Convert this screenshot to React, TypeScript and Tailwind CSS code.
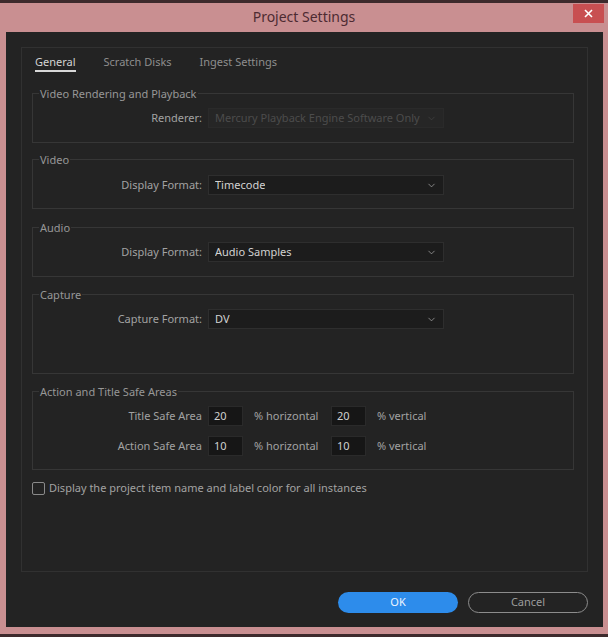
import { ChevronDown } from 'lucide-react'

const font = { fontFamily: '"Noto Sans", "Open Sans", sans-serif' }

const Select = ({ value, disabled = false }: { value: string, disabled?: boolean }) => {
    return <div className={`flex items-center justify-between w-[236px] h-[20px] pl-[6px] pr-[6px] border ${disabled ? 'bg-[#262626] border-[#2a2a2a] text-[#4c4c4c]' : 'bg-[#1c1c1c] border-[#2e2e2e] text-[#d2d2d2]'}`}>
        <span className="truncate">{value}</span>
        <ChevronDown size={11} strokeWidth={1.5} className={disabled ? 'text-[#444]' : 'text-[#b0b0b0]'} />
    </div>
}

const Row = ({ label, children }: { label: string, children: React.ReactNode }) => {
    return <div className="flex items-center h-[20px]">
        <div className="w-[175px] text-right pr-[6px] text-[#a2a2a2]">{label}</div>
        {children}
    </div>
}

const Group = ({ title, children, className = '' }: { title: string, children: React.ReactNode, className?: string }) => {
    return <fieldset className={`border border-[#363636] ml-[10px] mr-[13px] pl-0 ${className}`}>
        <legend className="ml-[6px] px-[1px] text-[#979797] leading-[15px]">{title}</legend>
        {children}
    </fieldset>
}

const NumBox = ({ value }: { value: string }) => {
    return <div className="w-[35px] h-[20px] bg-[#161616] border border-[#2a2a2a] pl-[5px] text-[#d0d0d0] leading-[18px]">{value}</div>
}

export default function App() {
    return <div className="w-[608px] h-[637px] bg-[#c98f91] flex flex-col text-[11px]" style={font}>
        <div className="h-[3px] bg-[#3d2a2c]" />
        <div className="h-[29px] flex items-center justify-center relative">
            <span className="text-[14px] text-[#4d2b31] mt-[-2px]">Project Settings</span>
            <div className="absolute right-[4px] top-[1px] w-[31px] h-[19px] bg-[#c84f51] flex items-center justify-center">
                <svg width="9" height="9" viewBox="0 0 9 9"><path d="M1 1L8 8M8 1L1 8" stroke="#fff" strokeWidth="1.6" /></svg>
            </div>
        </div>
        <div className="mx-[6px] mr-[5px] h-[595px] bg-[#232323] pt-[15px] pl-[15px] pr-[15px] flex flex-col">
            <div className="h-[525px] border border-[#313131] flex flex-col">
                <div className="flex pt-[6px] pl-[13px] gap-[28px]">
                    <div className="text-[#d4d4d4] border-b-2 border-[#d8d8d8] pb-[1px] leading-[15px]">General</div>
                    <div className="text-[#8e8e8e] leading-[15px]">Scratch Disks</div>
                    <div className="text-[#8e8e8e] leading-[15px]">Ingest Settings</div>
                </div>
                <Group title="Video Rendering and Playback" className="mt-[14px] pt-[7px] pb-[14px]">
                    <Row label="Renderer:"><Select value="Mercury Playback Engine Software Only" disabled /></Row>
                </Group>
                <Group title="Video" className="mt-[9px] pt-[8px] pb-[13px]">
                    <Row label="Display Format:"><Select value="Timecode" /></Row>
                </Group>
                <Group title="Audio" className="mt-[11px] pt-[7px] pb-[14px]">
                    <Row label="Display Format:"><Select value="Audio Samples" /></Row>
                </Group>
                <Group title="Capture" className="mt-[10px] pt-[7px] pb-[44px]">
                    <Row label="Capture Format:"><Select value="DV" /></Row>
                </Group>
                <Group title="Action and Title Safe Areas" className="mt-[10px] pt-[7px] pb-[13px]">
                    <div className="flex flex-col gap-[10px]">
                        <Row label="Title Safe Area">
                            <NumBox value="20" />
                            <span className="ml-[11px] w-[77px] text-[#a2a2a2]">% horizontal</span>
                            <NumBox value="20" />
                            <span className="ml-[11px] text-[#a2a2a2]">% vertical</span>
                        </Row>
                        <Row label="Action Safe Area">
                            <NumBox value="10" />
                            <span className="ml-[11px] w-[77px] text-[#a2a2a2]">% horizontal</span>
                            <NumBox value="10" />
                            <span className="ml-[11px] text-[#a2a2a2]">% vertical</span>
                        </Row>
                    </div>
                </Group>
                <div className="flex items-center mt-[10px] ml-[10px]">
                    <div className="w-[13px] h-[13px] border border-[#8a8a8a] rounded-[2px]" />
                    <span className="ml-[4px] text-[#a2a2a2]">Display the project item name and label color for all instances</span>
                </div>
            </div>
            <div className="flex justify-end gap-[10px] mt-[20px]">
                <div className="w-[120px] h-[21px] rounded-full bg-[#2d8ceb] text-[#eef4ff] flex items-center justify-center">OK</div>
                <div className="w-[120px] h-[21px] rounded-full border border-[#8c8c8c] text-[#9c9c9c] flex items-center justify-center">Cancel</div>
            </div>
        </div>
        <div className="h-[3px] mt-auto bg-[#3d2a2c]" />
    </div>
}
